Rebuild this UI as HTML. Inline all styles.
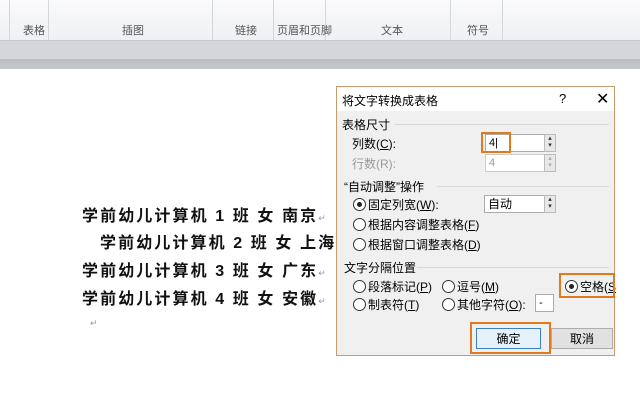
<!DOCTYPE html><html><head><meta charset="utf-8"><style>
body{margin:0;width:640px;height:420px;overflow:hidden;background:#fff;font-family:"Liberation Sans","Noto Sans CJK SC",sans-serif;position:relative}
.a{position:absolute}
.rib{left:0;top:0;width:640px;height:40px;background:linear-gradient(#fbfbfc,#eef0f3);border-bottom:1px solid #c5c9cf}
.sep{top:0;width:1px;height:40px;background:#d3d6db}
.gl{top:22px;font-size:11px;color:#555}
.line{font-size:16px;font-weight:bold;color:#111;letter-spacing:2.1px;white-space:nowrap}
.ret{font-size:9px;color:#999;font-weight:normal}
.dlg{left:336px;top:86px;width:277px;height:268px;border:1px solid #c99a6c;background:#f0f0f0}
.t{font-size:12px;color:#000;position:absolute;white-space:nowrap}
.rad{position:absolute;width:11px;height:11px;border:1px solid #333;border-radius:50%;background:#fff}
.rad.on::after{content:"";position:absolute;left:3px;top:3px;width:5px;height:5px;border-radius:50%;background:#222}
.box{position:absolute;background:#fff;border:1px solid #aaa;font-size:11px;padding-left:3px;box-sizing:border-box}
.spin{position:absolute;width:12px;background:#e8e8e8;border:1px solid #bbb;box-sizing:border-box;font-size:7px;line-height:7px;text-align:center;color:#333}
.hr{position:absolute;height:1px;background:#d8d8d8}
.btn{position:absolute;height:21px;border:1px solid #adadad;background:#e1e1e1;font-size:12px;text-align:center;line-height:21px;box-sizing:border-box}
.org{position:absolute;border:2px solid #e07a20;box-sizing:border-box}
</style></head><body>
<div class="a rib"></div>
<div class="a sep" style="left:9px"></div><div class="a sep" style="left:48px"></div><div class="a sep" style="left:212px"></div><div class="a sep" style="left:273px"></div><div class="a sep" style="left:325px"></div><div class="a sep" style="left:450px"></div><div class="a sep" style="left:502px"></div>
<div class="a gl" style="left:23px">表格</div><div class="a gl" style="left:122px">插图</div><div class="a gl" style="left:235px">链接</div><div class="a gl" style="left:277px">页眉和页脚</div><div class="a gl" style="left:381px">文本</div><div class="a gl" style="left:467px">符号</div>
<div class="a" style="left:0;top:41px;width:640px;height:18px;background:#d4d6d9"></div>
<div class="a" style="left:0;top:59px;width:640px;height:10px;background:linear-gradient(#b9bcc0,#c6c8cb)"></div>
<div class="a line" style="left:82px;top:202px">学前幼儿计算机 1 班 女 南京<span class="ret">↵</span></div>
<div class="a line" style="left:100px;top:229px">学前幼儿计算机 2 班 女 上海<span class="ret">↵</span></div>
<div class="a line" style="left:82px;top:257px">学前幼儿计算机 3 班 女 广东<span class="ret">↵</span></div>
<div class="a line" style="left:82px;top:285px">学前幼儿计算机 4 班 女 安徽<span class="ret">↵</span></div>
<div class="a ret" style="left:90px;top:318px">↵</div>
<div class="a dlg">
<div class="a" style="left:0;top:0;width:277px;height:24px;background:#fff"></div>
<div class="t" style="left:5px;top:5px">将文字转换成表格</div>
<div class="t" style="left:222px;top:4px;font-size:13px">?</div>
<div class="t" style="left:259px;top:2px;font-size:16px">✕</div>
<div class="t" style="left:5px;top:29px">表格尺寸</div><div class="hr" style="left:58px;top:37px;width:214px"></div>
<div class="t" style="left:15px;top:48px">列数(<u>C</u>):</div>
<div class="box" style="left:148px;top:47px;width:60px;height:18px;line-height:16px">4|</div><div class="spin" style="left:207px;top:47px;height:18px">▴<br>▾</div>
<div class="org" style="left:144px;top:45px;width:30px;height:21px"></div>
<div class="t" style="left:15px;top:68px;color:#999">行数(R):</div>
<div class="box" style="left:148px;top:67px;width:60px;height:18px;line-height:16px;color:#999;border-color:#ccc">4</div><div class="spin" style="left:207px;top:67px;height:18px;color:#aaa">▴<br>▾</div>
<div class="t" style="left:7px;top:91px">“自动调整”操作</div><div class="hr" style="left:100px;top:99px;width:172px"></div>
<div class="rad on" style="left:16px;top:111px"></div><div class="t" style="left:31px;top:109px">固定列宽(<u>W</u>):</div>
<div class="box" style="left:147px;top:108px;width:61px;height:18px;line-height:16px;font-size:12px">自动</div><div class="spin" style="left:207px;top:108px;height:18px">▴<br>▾</div>
<div class="rad" style="left:16px;top:131px"></div><div class="t" style="left:31px;top:129px">根据内容调整表格(<u>F</u>)</div>
<div class="rad" style="left:16px;top:151px"></div><div class="t" style="left:31px;top:149px">根据窗口调整表格(<u>D</u>)</div>
<div class="t" style="left:7px;top:172px">文字分隔位置</div><div class="hr" style="left:80px;top:180px;width:192px"></div>
<div class="rad" style="left:16px;top:193px"></div><div class="t" style="left:31px;top:191px">段落标记(<u>P</u>)</div>
<div class="rad" style="left:105px;top:193px"></div><div class="t" style="left:120px;top:191px">逗号(<u>M</u>)</div>
<div class="rad on" style="left:228px;top:193px"></div><div class="t" style="left:243px;top:191px">空格(<u>S</u></div>
<div class="org" style="left:222px;top:186px;width:56px;height:25px"></div>
<div class="rad" style="left:16px;top:211px"></div><div class="t" style="left:31px;top:209px">制表符(<u>T</u>)</div>
<div class="rad" style="left:105px;top:211px"></div><div class="t" style="left:120px;top:209px">其他字符(<u>O</u>):</div>
<div class="box" style="left:198px;top:207px;width:19px;height:18px;line-height:16px">-</div>
<div class="btn" style="left:139px;top:241px;width:65px;border:1px solid #3c7fd1;background:#e5f1fb">确定</div>
<div class="org" style="left:133px;top:235px;width:81px;height:32px"></div>
<div class="btn" style="left:214px;top:241px;width:62px">取消</div>
</div>
</body></html>
